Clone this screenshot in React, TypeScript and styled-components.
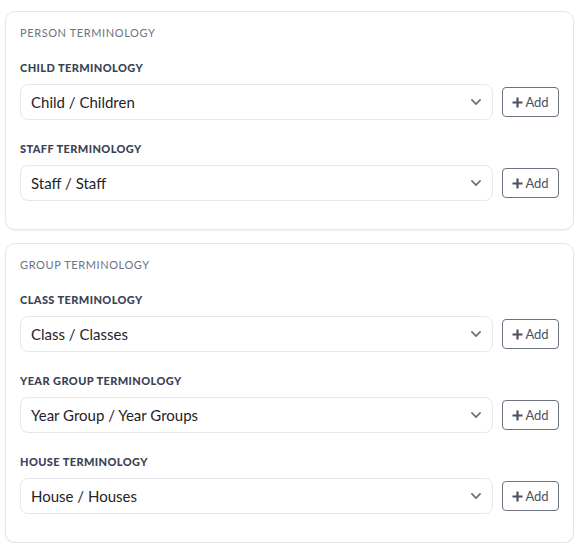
import { createGlobalStyle } from "styled-components";
import styled from "styled-components";

type Field = { label: string; value: string };
type Section = { title: string; fields: Field[] };

const sections: Section[] = [
  {
    title: "Person Terminology",
    fields: [
      { label: "Child Terminology", value: "Child / Children" },
      { label: "Staff Terminology", value: "Staff / Staff" },
    ],
  },
  {
    title: "Group Terminology",
    fields: [
      { label: "Class Terminology", value: "Class / Classes" },
      { label: "Year Group Terminology", value: "Year Group / Year Groups" },
      { label: "House Terminology", value: "House / Houses" },
    ],
  },
];

const GlobalStyle = createGlobalStyle`
  body {
    margin: 0;
    background: #ffffff;
    font-family: "Source Sans Pro", Lato, "Noto Sans", sans-serif;
  }
`;

const Chevron = () => (
  <svg width="14" height="14" viewBox="0 0 24 24" fill="none">
    <path
      d="M5 8.5l7 7 7-7"
      stroke="#6b7280"
      strokeWidth="3"
      strokeLinecap="round"
      strokeLinejoin="round"
    />
  </svg>
);

const Plus = () => (
  <svg width="11" height="11" viewBox="0 0 12 12">
    <path d="M6 0.5v11M0.5 6h11" stroke="#4b5160" strokeWidth="2.4" />
  </svg>
);

export default function App() {
  return (
    <>
      <GlobalStyle />
      <StyledPage>
        {sections.map((section) => (
          <StyledCard key={section.title}>
            <StyledCardTitle>{section.title}</StyledCardTitle>
            {section.fields.map((field) => (
              <StyledField key={field.label}>
                <StyledLabel>{field.label}</StyledLabel>
                <StyledRow>
                  <StyledSelect>
                    <span>{field.value}</span>
                    <Chevron />
                  </StyledSelect>
                  <StyledAddButton>
                    <Plus />
                    Add
                  </StyledAddButton>
                </StyledRow>
              </StyledField>
            ))}
          </StyledCard>
        ))}
      </StyledPage>
    </>
  );
}

const StyledPage = styled.div`
  display: flex;
  flex-direction: column;
  gap: 13px;
  padding: 11px 10px 0 5px;
`;

const StyledCard = styled.section`
  background: #ffffff;
  border: 1px solid #e4e6ea;
  border-radius: 10px;
  box-shadow: 0 1px 2px rgba(16, 24, 40, 0.06);
  display: flex;
  flex-direction: column;
  gap: 22px;
  padding: 14px 14px 28px 14px;
`;

const StyledCardTitle = styled.h3`
  color: #6b7385;
  font-size: 11px;
  font-weight: 400;
  letter-spacing: 0.6px;
  line-height: 14px;
  margin: 0 0 -1px;
  text-transform: uppercase;
`;

const StyledField = styled.div`
  display: flex;
  flex-direction: column;
  gap: 9px;
`;

const StyledLabel = styled.label`
  color: #3a4255;
  font-size: 11px;
  font-weight: 900;
  letter-spacing: 0.4px;
  line-height: 14px;
  text-transform: uppercase;
`;

const StyledRow = styled.div`
  align-items: center;
  display: flex;
  gap: 9px;
`;

const StyledSelect = styled.div`
  align-items: center;
  border: 1px solid #e5e7eb;
  border-radius: 8px;
  box-sizing: border-box;
  color: #1f2328;
  display: flex;
  flex: 1;
  font-size: 15px;
  height: 36px;
  justify-content: space-between;
  padding: 0 9px 0 10px;
`;

const StyledAddButton = styled.button`
  align-items: center;
  background: #ffffff;
  border: 1px solid #6b7280;
  border-radius: 4px;
  box-sizing: border-box;
  color: #4b5160;
  display: flex;
  font-family: inherit;
  font-size: 13px;
  gap: 2px;
  height: 30px;
  justify-content: center;
  padding: 0;
  width: 57px;
`;
